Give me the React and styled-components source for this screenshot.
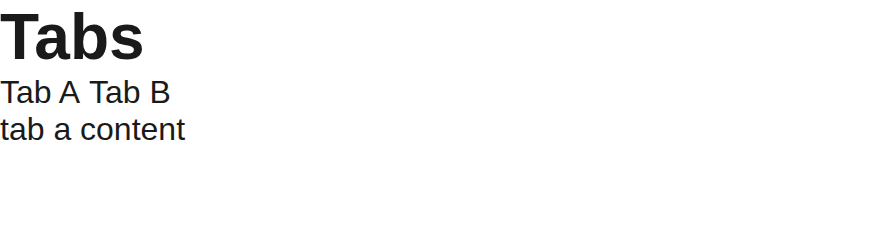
import React, { useState } from 'react';
import styled, { createGlobalStyle } from 'styled-components';

const GlobalStyle = createGlobalStyle`
  body {
    margin: 0;
    background: #fff;
    color: #1a1a1a;
    font-family: "Liberation Sans", Arial, sans-serif;
  }
`;

const Title = styled.h1`
  margin: 0;
  font-size: 64px;
  font-weight: 700;
`;

const TabList = styled.div`
  display: flex;
  gap: 9px;
  font-size: 32px;
`;

const Tab = styled.span`
  cursor: pointer;
`;

const Panel = styled.div`
  font-size: 32px;
`;

const tabs = [
  { id: 'a', label: 'Tab A', content: 'tab a content' },
  { id: 'b', label: 'Tab B', content: 'tab b content' },
];

const App = () => {
  const [active, setActive] = useState('a');
  const current = tabs.find((t) => t.id === active);

  return (
    <>
      <GlobalStyle />
      <Title>Tabs</Title>
      <TabList>
        {tabs.map((t) => (
          <Tab key={t.id} onClick={() => setActive(t.id)}>
            {t.label}
          </Tab>
        ))}
      </TabList>
      <Panel>{current.content}</Panel>
    </>
  );
};

export default App;
